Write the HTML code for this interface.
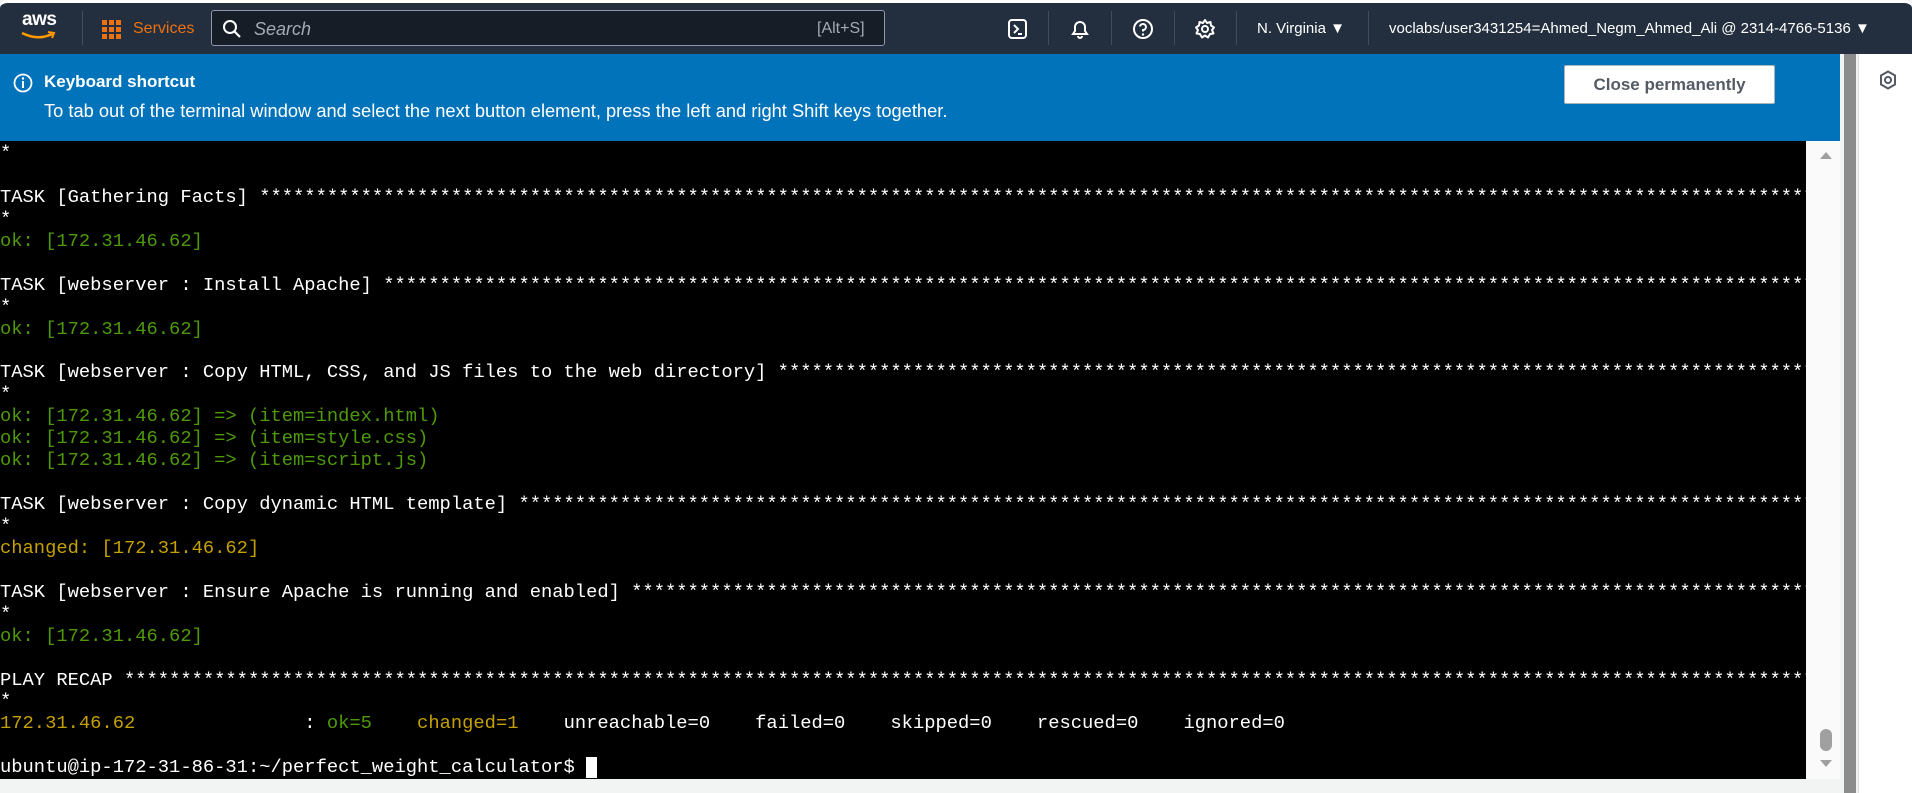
<!DOCTYPE html>
<html><head><meta charset="utf-8"><style>
*{margin:0;padding:0;box-sizing:border-box}
body{width:1912px;height:793px;overflow:hidden;background:#f2f3f3;font-family:"Liberation Sans",sans-serif;position:relative}
.nav{position:absolute;left:0;top:0;width:1912px;height:54px;background:#232f3e;border-top:3px solid #fff;border-radius:8px 8px 0 0}
.nav *{position:absolute}
.div{width:1px;height:34px;background:#414d5c;top:8px}
.banner{position:absolute;left:0;top:54px;width:1840px;height:87px;background:#0073bb;color:#fff}
.term{position:absolute;left:0;top:141px;width:1806px;height:638px;background:#000;overflow:hidden}
.lines{position:absolute;left:0;top:0;font-family:"Liberation Mono",monospace;font-size:18.8px;line-height:21.95px;color:#fff;padding-top:2px}
.l{height:21.95px;width:161ch;overflow:hidden;white-space:pre}
.g{color:#4e9a06}.y{color:#c4a000}
.track{position:absolute;left:1806px;top:141px;width:34px;height:638px;background:#fafafa}
.bar{position:absolute;left:1844px;top:54px;width:12px;height:739px;background:#8c8c8c}
.panel{position:absolute;left:1858px;top:54px;width:54px;height:739px;background:#fff;border-left:1px solid #ddd}
</style></head><body>
<div class="nav">
 <div style="left:22px;top:6px;color:#fff;font-size:19px;font-weight:bold;letter-spacing:-0.5px">aws</div>
 <svg style="left:20px;top:28px" width="36" height="10"><path d="M2 2 Q18 10 32 3" stroke="#ff9900" stroke-width="2.5" fill="none"/><path d="M28 1 L34 2 L32 7" stroke="#ff9900" stroke-width="2" fill="none"/></svg>
 <div class="div" style="left:82px"></div>
 <svg style="left:102px;top:17px" width="20" height="20"><g fill="#ec7211"><rect x="0" y="0" width="5" height="5"/><rect x="7" y="0" width="5" height="5"/><rect x="14" y="0" width="5" height="5"/><rect x="0" y="7" width="5" height="5"/><rect x="7" y="7" width="5" height="5"/><rect x="14" y="7" width="5" height="5"/><rect x="0" y="14" width="5" height="5"/><rect x="7" y="14" width="5" height="5"/><rect x="14" y="14" width="5" height="5"/></g></svg>
 <div style="left:133px;top:17px;color:#ec7211;font-size:16px">Services</div>
 <div style="left:211px;top:7px;width:674px;height:36px;background:#161d26;border:1px solid #8d99a8;border-radius:3px"></div>
 <svg style="left:222px;top:16px" width="20" height="20"><circle cx="8" cy="8" r="6" stroke="#fff" stroke-width="2" fill="none"/><path d="M12.5 12.5 L18 18" stroke="#fff" stroke-width="2.2"/></svg>
 <div style="left:254px;top:16px;color:#a3aab5;font-size:18px;font-style:italic">Search</div>
 <div style="left:817px;top:17px;color:#a3aab5;font-size:16px">[Alt+S]</div>
 <svg style="left:1008px;top:16px" width="20" height="20"><rect x="1" y="1" width="17" height="18" rx="3" stroke="#fff" stroke-width="2" fill="none"/><path d="M6 6 L10 10 L6 14 M10 15 H14" stroke="#fff" stroke-width="2" fill="none"/></svg>
 <div class="div" style="left:1048px"></div>
 <svg style="left:1069px;top:15px" width="22" height="22"><path d="M4 16 H18 L16 13 V9 A5 5 0 0 0 6 9 V13 Z M9 18 A2 2 0 0 0 13 18" stroke="#fff" stroke-width="2" fill="none"/></svg>
 <div class="div" style="left:1111px"></div>
 <svg style="left:1132px;top:15px" width="22" height="22"><circle cx="11" cy="11" r="9" stroke="#fff" stroke-width="2" fill="none"/><path d="M8 8.5 A3 3 0 1 1 11 12 V13.5" stroke="#fff" stroke-width="2" fill="none"/><circle cx="11" cy="16.5" r="1.2" fill="#fff"/></svg>
 <div class="div" style="left:1174px"></div>
 <svg style="left:1194px;top:15px" width="22" height="22"><circle cx="11" cy="11" r="3" stroke="#fff" stroke-width="2" fill="none"/><path d="M11 2 L13 5 L16.5 4 L17 7.5 L20 9.5 L18 12 L19.5 15.5 L16 16 L14 19.5 L11 17.5 L8 19.5 L6 16 L2.5 15.5 L4 12 L2 9.5 L5 7.5 L5.5 4 L9 5 Z" stroke="#fff" stroke-width="2" fill="none" stroke-linejoin="round"/></svg>
 <div class="div" style="left:1236px"></div>
 <div style="left:1257px;top:17px;color:#fff;font-size:15px">N. Virginia &#9660;</div>
 <div class="div" style="left:1368px"></div>
 <div style="left:1389px;top:17px;color:#fff;font-size:15px">voclabs/user3431254=Ahmed_Negm_Ahmed_Ali @ 2314-4766-5136 &#9660;</div>
</div>
<div class="banner">
 <svg style="position:absolute;left:13px;top:19px" width="20" height="20"><circle cx="10" cy="10" r="8.5" stroke="#fff" stroke-width="1.8" fill="none"/><rect x="9" y="8" width="2" height="7" fill="#fff"/><circle cx="10" cy="5.5" r="1.2" fill="#fff"/></svg>
 <div style="position:absolute;left:44px;top:18px;font-size:17px;font-weight:bold">Keyboard shortcut</div>
 <div style="position:absolute;left:44px;top:46px;font-size:18.3px">To tab out of the terminal window and select the next button element, press the left and right Shift keys together.</div>
 <div style="position:absolute;left:1564px;top:11px;width:211px;height:39px;background:#fff;border:1px solid #aab7b8;border-radius:2px;color:#545b64;font-size:17px;font-weight:bold;text-align:center;line-height:37px">Close permanently</div>
</div>
<div class="term"><div class="lines"><div class="l">*</div><div class="l"> </div><div class="l">TASK [Gathering Facts] **************************************************************************************************************************************************************</div><div class="l">*</div><div class="l g">ok: [172.31.46.62]</div><div class="l"> </div><div class="l">TASK [webserver : Install Apache] ***************************************************************************************************************************************************</div><div class="l">*</div><div class="l g">ok: [172.31.46.62]</div><div class="l"> </div><div class="l">TASK [webserver : Copy HTML, CSS, and JS files to the web directory] ***********************************************************************************************************</div><div class="l">*</div><div class="l g">ok: [172.31.46.62] =&gt; (item=index.html)</div><div class="l g">ok: [172.31.46.62] =&gt; (item=style.css)</div><div class="l g">ok: [172.31.46.62] =&gt; (item=script.js)</div><div class="l"> </div><div class="l">TASK [webserver : Copy dynamic HTML template] ***************************************************************************************************************************************</div><div class="l">*</div><div class="l y">changed: [172.31.46.62]</div><div class="l"> </div><div class="l">TASK [webserver : Ensure Apache is running and enabled] *****************************************************************************************************************************</div><div class="l">*</div><div class="l g">ok: [172.31.46.62]</div><div class="l"> </div><div class="l">PLAY RECAP *************************************************************************************************************************************************************************</div><div class="l">*</div><div class="l"><span class="y">172.31.46.62</span>               : <span class="g">ok=5</span>    <span class="y">changed=1</span>    unreachable=0    failed=0    skipped=0    rescued=0    ignored=0</div><div class="l"> </div><div class="l">ubuntu@ip-172-31-86-31:~/perfect_weight_calculator$ <span style="background:#fff"> </span></div></div></div>
<div class="track">
 <svg style="position:absolute;left:13px;top:9px" width="14" height="10"><path d="M1 9 L7 2 L13 9 Z" fill="#a0a0a0"/></svg>
 <div style="position:absolute;left:14px;top:588px;width:12px;height:22px;border-radius:6px;background:#a0a0a0"></div>
 <svg style="position:absolute;left:13px;top:618px" width="14" height="10"><path d="M1 1 L7 8 L13 1 Z" fill="#a0a0a0"/></svg>
</div>
<div class="bar"></div>
<div class="panel">
 <svg style="position:absolute;left:20px;top:16px" width="18" height="20"><path d="M9 1.5 L16 5.5 V14.5 L9 18.5 L2 14.5 V5.5 Z" stroke="#545b64" stroke-width="2" fill="none"/><circle cx="9" cy="10" r="3" stroke="#545b64" stroke-width="2" fill="none"/></svg>
</div>
</body></html>
